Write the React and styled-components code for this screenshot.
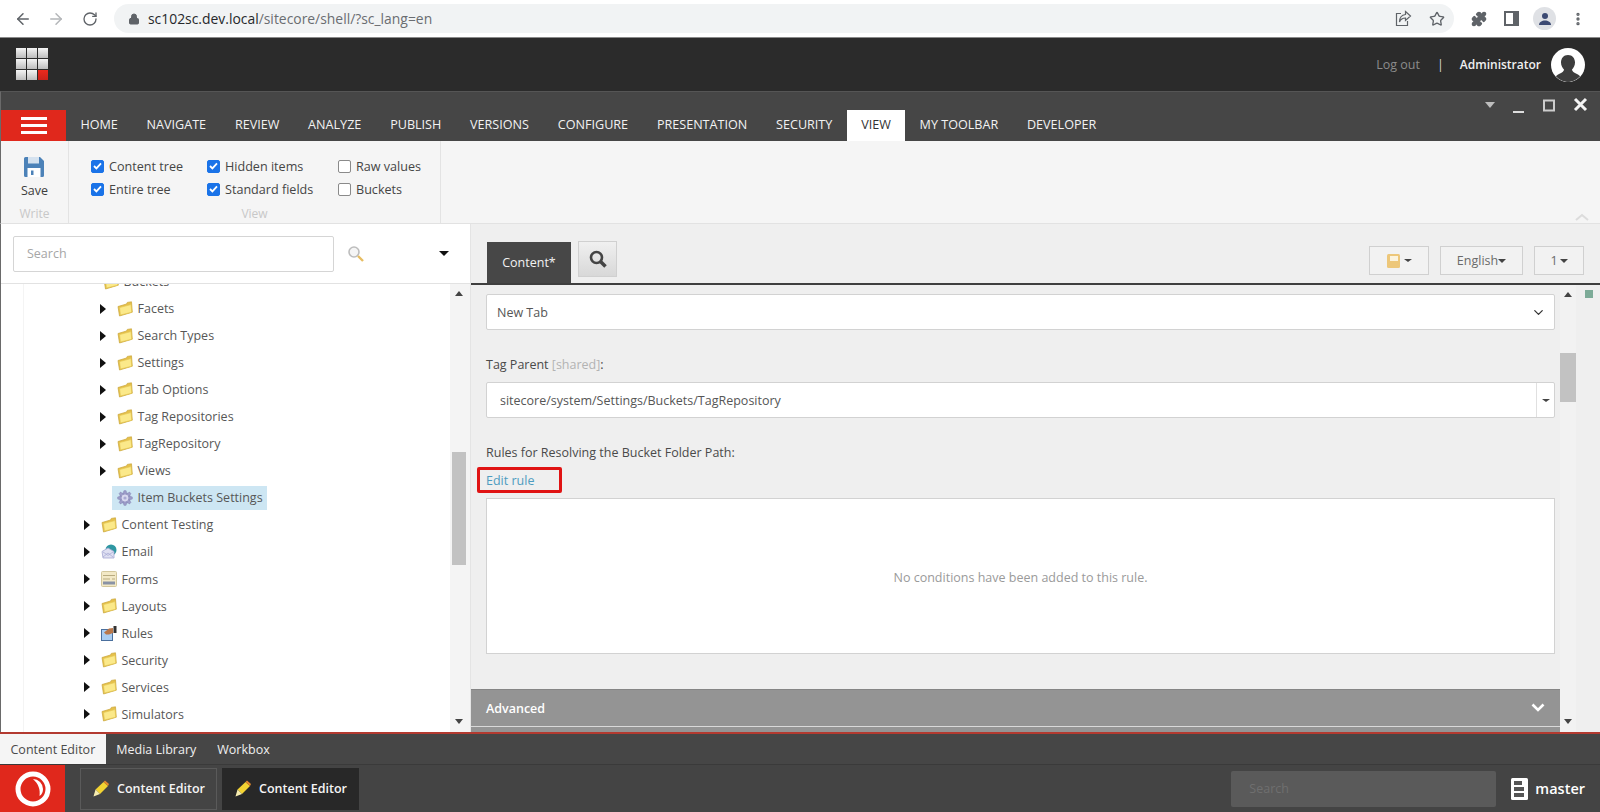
import React from "react";
import styled, { createGlobalStyle } from "styled-components";
import {
  ArrowLeft,
  ArrowRight,
  RotateCw,
  Lock,
  Star,
  Puzzle,
  EllipsisVertical,
  ChevronDown,
} from "lucide-react";

const GlobalStyle = createGlobalStyle`
  html, body { margin: 0; padding: 0; height: 100%; overflow: hidden; }
  body { font-family: "Open Sans", "Liberation Sans", sans-serif; background: #fff; }
  * { box-sizing: border-box; }
`;

const Page = styled.div`
  width: 1600px;
  height: 812px;
  display: flex;
  flex-direction: column;
  overflow: hidden;
`;

/* browser chrome */
const Chrome = styled.div`
  height: 38px;
  flex: none;
  display: flex;
  align-items: center;
  padding: 0 0 0 14px;
  background: #fff;
  color: #5f6368;
  border-bottom: 1px solid #8a8a8a;
`;

const NavBtn = styled.span`
  display: flex;
  width: 18px;
  margin-right: ${(p) => p.$gap || 15}px;
  color: ${(p) => (p.$off ? "#b4b6b9" : "#5f6368")};
`;

const Omnibox = styled.div`
  width: 1340px;
  height: 29px;
  border-radius: 15px;
  background: #f1f3f4;
  display: flex;
  align-items: center;
  gap: 17px;
  padding: 0 9px 0 14px;
`;

const Url = styled.span`
  font-size: 13.9px;
  margin-left: -9px;
  color: #6a6d71;
  flex: 1;
  b { font-weight: 400; color: #26282b; }
`;

const ChromeIcons = styled.div`
  display: flex;
  align-items: center;
  margin-left: 8px;
`;

const ChromeSlot = styled.span`
  width: 33px;
  display: flex;
  align-items: center;
  justify-content: center;
`;

const Avatar = styled.span`
  width: 23px;
  height: 23px;
  border-radius: 50%;
  background: #dfe1e5;
  display: flex;
  align-items: center;
  justify-content: center;
`;

/* sitecore top bar */
const TopBar = styled.div`
  height: 53px;
  flex: none;
  display: flex;
  align-items: center;
  background: #2b2b2b;
  padding: 0 15px 0 16px;
`;

const AppGrid = styled.div`
  display: grid;
  grid-template-columns: repeat(3, 10px);
  grid-auto-rows: 10px;
  gap: 1px;
  margin-top: -1px;
`;

const AppCell = styled.i`
  background: ${(p) => (p.$red ? "linear-gradient(#ec2a1d,#c9221a)" : "linear-gradient(#f4f4f4,#bdbdbd)")};
`;

const TopRight = styled.div`
  margin-left: auto;
  display: flex;
  align-items: center;
  font-size: 12.5px;
`;

const Logout = styled.span`
  color: #8c8c8c;
`;

const Pipe = styled.span`
  color: #d8d8d8;
  margin: 0 16px 0 17px;
`;

const UserName = styled.span`
  color: #f0f0f0;
  font-weight: 600;
  font-size: 12px;
  margin-right: 10px;
`;

const UserPic = styled.span`
  width: 34px;
  height: 34px;
  border-radius: 50%;
  overflow: hidden;
  display: block;
  background: #fff;
`;

/* ribbon */
const TabBar = styled.div`
  height: 50px;
  flex: none;
  position: relative;
  display: flex;
  align-items: flex-end;
  background: #464646;
  border-top: 1px solid #555;
  border-left: 1px solid #6a6a6a;
`;

const Burger = styled.div`
  width: 65px;
  height: 31px;
  background: #e0281c;
  display: flex;
  flex-direction: column;
  align-items: center;
  justify-content: center;
  gap: 4px;
  i { width: 26px; height: 3px; background: #fff; display: block; }
`;

const RibbonTab = styled.div`
  height: 31px;
  padding: 0 14.4px 2px;
  display: flex;
  align-items: center;
  font-size: 12.6px;
  color: ${(p) => (p.$active ? "#333" : "#f2f2f2")};
  background: ${(p) => (p.$active ? "#fff" : "transparent")};
`;

const WinControls = styled.div`
  position: absolute;
  top: 3px;
  right: 5px;
  display: flex;
  align-items: center;
`;

const Ribbon = styled.div`
  height: 83px;
  flex: none;
  display: flex;
  background: #f5f5f5;
  border-left: 1px solid #6a6a6a;
  border-bottom: 1px solid #e2e2e2;
  position: relative;
`;

const RibbonGroup = styled.div`
  width: ${(p) => p.$w}px;
  border-right: 1px solid #e3e3e3;
  display: flex;
  flex-direction: column;
  align-items: center;
  position: relative;
`;

const GroupBody = styled.div`
  flex: 1;
  display: flex;
  flex-direction: column;
  align-items: center;
  padding-top: 16px;
`;

const SaveLabel = styled.span`
  font-size: 12.5px;
  color: #3d3d3d;
  margin-top: 5px;
`;

const GroupName = styled.span`
  font-size: 12px;
  color: #c8c8c8;
  height: 18px;
`;

const CheckGrid = styled.div`
  display: grid;
  grid-template-columns: 116px 131px auto;
  grid-auto-rows: 22.7px;
  align-items: center;
  padding: 14px 0 0 22px;
  align-self: stretch;
  flex: 1;
`;

const CheckItem = styled.label`
  display: flex;
  align-items: center;
  font-size: 12.6px;
  color: #454545;
  white-space: nowrap;
`;

const Box = styled.span`
  width: 13px;
  height: 13px;
  flex: none;
  margin-right: 5px;
  border-radius: 2px;
  display: flex;
  align-items: center;
  justify-content: center;
  background: ${(p) => (p.$on ? "#1a73e8" : "#fff")};
  border: 1px solid ${(p) => (p.$on ? "#1a73e8" : "#8a8a8a")};
`;

const CollapseArrow = styled.span`
  position: absolute;
  right: 11px;
  bottom: 2px;
  line-height: 0;
`;

/* main split */
const Main = styled.div`
  flex: 1;
  min-height: 0;
  display: flex;
`;

const LeftPane = styled.div`
  width: 471px;
  flex: none;
  display: flex;
  flex-direction: column;
  background: #fff;
  border-left: 1px solid #6a6a6a;
  border-right: 1px solid #e4e4e4;
`;

const SearchRow = styled.div`
  height: 60px;
  flex: none;
  display: flex;
  align-items: center;
  padding: 0 0 0 12px;
  border-bottom: 1px solid #e2e2e2;
`;

const SearchInput = styled.div`
  width: 321px;
  height: 36px;
  border: 1px solid #d5d5d5;
  border-radius: 2px;
  display: flex;
  align-items: center;
  padding-left: 13px;
  font-size: 12.5px;
  color: #a6a6a6;
`;

const MagIcon = styled.span`
  margin-left: 13px;
  line-height: 0;
`;

const Caret = styled.span`
  width: 0;
  height: 0;
  border-left: ${(p) => p.$s || 5}px solid transparent;
  border-right: ${(p) => p.$s || 5}px solid transparent;
  border-top: ${(p) => (p.$s ? p.$s - 0.5 : 5)}px solid ${(p) => p.$c || "#111"};
  margin-left: ${(p) => p.$ml || 0}px;
  display: inline-block;
  flex: none;
`;

const TreeWrap = styled.div`
  flex: 1;
  min-height: 0;
  display: flex;
  overflow: hidden;
`;

const TreeClip = styled.div`
  flex: 1;
  overflow: hidden;
  margin-left: 22px;
  border-left: 1px solid #f4f4f4;
`;

const Tree = styled.div`
  margin-top: -16px;
`;

const Row = styled.div`
  height: 27.05px;
  display: flex;
  align-items: center;
  padding-left: ${(p) => p.$indent}px;
  font-size: 12.5px;
  color: #575757;
  white-space: nowrap;
`;

const Expander = styled.span`
  width: 0;
  height: 0;
  border-top: 5px solid transparent;
  border-bottom: 5px solid transparent;
  border-left: 6px solid #111;
  margin-right: 11px;
  flex: none;
`;

const Minus = styled.span`
  width: 6px;
  height: 1px;
  background: #444;
  margin-right: 11px;
`;

const ItemIcon = styled.span`
  width: 16px;
  height: 16px;
  margin-right: 4.5px;
  flex: none;
  line-height: 0;
`;

const Selected = styled.span`
  display: flex;
  align-items: center;
  height: 24px;
  padding: 0 4.5px 0 5px;
  background: #cde6f3;
  margin-left: -5px;
`;

const Scroll = styled.div`
  width: ${(p) => p.$w}px;
  flex: none;
  position: relative;
  background: ${(p) => p.$bg || "transparent"};
`;

const ScrollArrow = styled.span`
  position: absolute;
  left: ${(p) => p.$x}px;
  ${(p) => (p.$up ? "top: 7px;" : "bottom: 8px;")}
  width: 0;
  height: 0;
  border-left: 4px solid transparent;
  border-right: 4px solid transparent;
  ${(p) => (p.$up ? "border-bottom: 5px solid #444;" : "border-top: 5px solid #444;")}
`;

const Thumb = styled.span`
  position: absolute;
  left: ${(p) => p.$l}px;
  right: ${(p) => p.$r}px;
  top: ${(p) => p.$top}px;
  height: ${(p) => p.$h}px;
  background: #c2c2c2;
`;

/* editor */
const RightPane = styled.div`
  flex: 1;
  min-width: 0;
  display: flex;
  flex-direction: column;
  background: #efefef;
`;

const EditorHead = styled.div`
  height: 61px;
  flex: none;
  display: flex;
  align-items: flex-end;
  padding: 0 16px 0 16px;
  border-bottom: 2px solid #3f3f3f;
`;

const ContentTab = styled.div`
  width: 84px;
  height: 41px;
  background: #474747;
  color: #f2f2f2;
  font-size: 12.5px;
  display: flex;
  align-items: center;
  justify-content: center;
`;

const SearchTab = styled.div`
  width: 39px;
  height: 36px;
  margin: 0 0 6px 7px;
  border: 1px solid #d0d0d0;
  background: linear-gradient(#f0f0f0, #d8d8d8);
  display: flex;
  align-items: center;
  justify-content: center;
  color: #444;
`;

const HeadBtns = styled.div`
  margin-left: auto;
  display: flex;
  gap: 11px;
  margin-bottom: 8px;
`;

const HeadBtn = styled.div`
  width: ${(p) => p.$w}px;
  height: 29px;
  border: 1px solid #d0d0d0;
  background: #f2f2f2;
  display: flex;
  align-items: center;
  justify-content: center;
  font-size: 12.5px;
  color: #6a6a6a;
`;

const EditorBody = styled.div`
  flex: 1;
  min-height: 0;
  display: flex;
`;

const Fields = styled.div`
  width: 1089px;
  flex: none;
  display: flex;
  flex-direction: column;
  overflow: hidden;
`;

const FieldStack = styled.div`
  flex: 1;
  padding: 9px 5px 0 15px;
`;

const InputBox = styled.div`
  height: 36px;
  background: #fff;
  border: 1px solid #d2d2d2;
  border-radius: 2px;
  display: flex;
  align-items: center;
  font-size: 12.5px;
  color: #565656;
  padding-left: ${(p) => p.$pad}px;
`;

const EndIcon = styled.span`
  margin-left: auto;
  display: flex;
  align-items: center;
  justify-content: center;
  color: #333;
  width: ${(p) => p.$w}px;
  height: 100%;
  border-left: ${(p) => (p.$line ? "1px solid #e0e0e0" : "none")};
`;

const FieldLabel = styled.div`
  font-size: 12.5px;
  color: #4a4a4a;
  margin-top: ${(p) => p.$mt}px;
  height: 18px;
  line-height: 18px;
  margin-bottom: ${(p) => p.$mb}px;
  span { color: #b3b3b3; }
`;

const EditRule = styled.div`
  width: 85px;
  height: 26px;
  margin: 5px 0 5px -9px;
  padding-left: 6px;
  border: 3px solid #e01313;
  border-radius: 2px;
  display: flex;
  align-items: center;
  font-size: 12.5px;
  color: #4e9cc0;
`;

const RuleBox = styled.div`
  height: 156px;
  background: #fff;
  border: 1px solid #d2d2d2;
  display: flex;
  align-items: center;
  justify-content: center;
  font-size: 12.5px;
  color: #9a9a9a;
  padding-top: 2px;
`;

const SectionBar = styled.div`
  height: 38px;
  flex: none;
  background: #949494;
  border-top: 1px solid #858585;
  border-bottom: 1px solid #d9d9d9;
  color: #fff;
  font-weight: 600;
  font-size: 12.5px;
  display: flex;
  align-items: center;
  justify-content: space-between;
  padding: 0 15px 0 15px;
`;

const NextSection = styled.div`
  height: 5px;
  flex: none;
  background: #949494;
`;

const Validator = styled.i`
  position: absolute;
  top: 5px;
  left: 9px;
  width: 8px;
  height: 8px;
  background: #7dab98;
`;

/* bottom bars */
const BottomTabs = styled.div`
  height: 32px;
  flex: none;
  display: flex;
  background: #464646;
  border-top: 2px solid #b33a30;
`;

const BottomTab = styled.div`
  padding: 0 10.5px;
  display: flex;
  align-items: center;
  font-size: 12.5px;
  color: ${(p) => (p.$active ? "#4a4a4a" : "#f0f0f0")};
  background: ${(p) => (p.$active ? "#f5f5f5" : "transparent")};
`;

const TaskBar = styled.div`
  height: 48px;
  flex: none;
  display: flex;
  align-items: center;
  background: #444;
  border-top: 1px solid #3a3a3a;
`;

const StartBtn = styled.div`
  width: 65px;
  height: 100%;
  background: #e0281c;
  display: flex;
  align-items: center;
  justify-content: center;
  margin-right: 15px;
`;

const TaskBtn = styled.div`
  width: 137px;
  height: 42px;
  margin-right: 5px;
  display: flex;
  align-items: center;
  padding-left: 12px;
  gap: 8px;
  color: #f5f5f5;
  font-weight: 600;
  font-size: 12.5px;
  background: ${(p) => (p.$dark ? "#282828" : "#444")};
  border: 1px solid ${(p) => (p.$dark ? "#282828" : "#5a5a5a")};
`;

const TaskSearch = styled.div`
  margin-left: auto;
  width: 265px;
  height: 36px;
  background: #5a5a5a;
  border-radius: 2px;
  display: flex;
  align-items: center;
  padding-left: 18px;
  font-size: 12.5px;
  color: #6f6f6f;
`;

const DbName = styled.div`
  display: flex;
  align-items: center;
  gap: 7px;
  margin: 0 15px 0 15px;
  color: #fff;
  font-weight: 600;
  font-size: 14.5px;
`;

const ShareIco = () => (
  <svg width="17" height="17" viewBox="0 0 17 17" fill="none" stroke="#5f6368" strokeWidth="1.2">
    <path d="M6 3.500H1.500v12h11V11" />
    <path d="M10.500 1.500 15.500 6l-5 4.500V8C7 8 5.500 9.500 4.500 12c0-4.500 2-7 6-7.500z" />
  </svg>
);

const Folder = () => (
  <svg width="16" height="16" viewBox="0 0 16 16">
    <path d="M1 5.500 9.500 3l.8-1.600 4.200-.6.8 10.400L2.500 15z" fill="#e6c04a" stroke="#c9a53a" strokeWidth=".7" />
    <path d="M2.600 6.600 14 3.600l.7 7.600L3.400 14z" fill="#fbe98a" stroke="#e3c550" strokeWidth=".6" />
  </svg>
);

const Gear = () => (
  <svg width="16" height="16" viewBox="0 0 16 16">
    <g fill="#9d9dc9" stroke="#7f7fae" strokeWidth=".4">
      <circle cx="8" cy="8" r="5.600" />
      {[0, 45, 90, 135].map((a) => (
        <rect key={a} x="6.700" y="0.600" width="2.600" height="14.800" rx=".7" transform={`rotate(${a} 8 8)`} />
      ))}
    </g>
    <circle cx="8" cy="8" r="3.400" fill="#d8d8ee" />
    <circle cx="8" cy="8" r="1.600" fill="#a9a9d2" />
  </svg>
);

const Mail = () => (
  <svg width="16" height="16" viewBox="0 0 16 16">
    <circle cx="10" cy="6" r="5.500" fill="#2e97a2" />
    <path d="M1 7.500 7 4l6 3.500V14H2z" fill="#dfe0f2" stroke="#a5a7d2" strokeWidth=".8" />
    <path d="m2 13 5-4 5 4M2 8l5 3.400L12 8" fill="none" stroke="#a5a7d2" strokeWidth=".7" />
  </svg>
);

const FormIco = () => (
  <svg width="16" height="16" viewBox="0 0 16 16">
    <rect x=".5" y=".5" width="15" height="15" rx="1" fill="#f3e9c6" stroke="#d3c79c" />
    <path d="M2 4.500h12M2 8h7M11 8h3" stroke="#b8ab80" strokeWidth="1" />
    <rect x="2" y="10.500" width="12" height="3" fill="#8a93a5" />
  </svg>
);

const RulesIco = () => (
  <svg width="16" height="16" viewBox="0 0 16 16">
    <rect x=".5" y="4.500" width="11" height="11" fill="#a9cdf2" stroke="#4a6f9d" />
    <path d="M3 7.500 8 3.500l4-.5v5l-4 1.500H5z" fill="#b9774a" />
    <rect x="12.500" y="1" width="3" height="7" fill="#333" />
  </svg>
);

const Pencil = () => (
  <svg width="16" height="17" viewBox="0 0 16 17">
    <path d="M2.500 9.500 10.500 2l4.500 4-8 8z" fill="#f3d332" />
    <path d="M10.500 2 12 .5 16 4l-1 2z" fill="#e4892d" />
    <path d="M2.500 9.500 7 14l-6.500 2.500z" fill="#f6ecb0" />
  </svg>
);

const Row1 = ({ indent, icon = <Folder />, open, children }) => (
  <Row $indent={indent}>
    {open ? <Minus /> : <Expander />}
    <ItemIcon>{icon}</ItemIcon>
    {children}
  </Row>
);

const Check = ({ on, children }) => (
  <CheckItem>
    <Box $on={on}>
      {on && (
        <svg width="9" height="8" viewBox="0 0 9 8">
          <path d="M1 4l2.400 2.400L8 1.400" fill="none" stroke="#fff" strokeWidth="1.800" />
        </svg>
      )}
    </Box>
    {children}
  </CheckItem>
);

const ribbonTabs = [
  "HOME",
  "NAVIGATE",
  "REVIEW",
  "ANALYZE",
  "PUBLISH",
  "VERSIONS",
  "CONFIGURE",
  "PRESENTATION",
  "SECURITY",
  "VIEW",
  "MY TOOLBAR",
  "DEVELOPER",
];

const appCells = [0, 1, 2, 3, 4, 5, 6, 7, 8];

export default function App() {
  return (
    <Page>
      <GlobalStyle />
      <Chrome>
        <NavBtn $gap={15}><ArrowLeft size={18} /></NavBtn>
        <NavBtn $off $gap={17}><ArrowRight size={18} /></NavBtn>
        <NavBtn $gap={14}><RotateCw size={16} /></NavBtn>
        <Omnibox>
          <Lock size={12} fill="#5f6368" />
          <Url><b>sc102sc.dev.local</b>/sitecore/shell/?sc_lang=en</Url>
          <ShareIco />
          <Star size={16} />
        </Omnibox>
        <ChromeIcons>
          <ChromeSlot><Puzzle size={16} fill="#5f6368" /></ChromeSlot>
          <ChromeSlot>
            <svg width="15" height="15" viewBox="0 0 15 15">
              <path d="M0 0h15v15H0z" fill="#5f6368" />
              <path d="M2 2h7v11H2z" fill="#fff" />
            </svg>
          </ChromeSlot>
          <ChromeSlot>
            <Avatar>
              <svg width="14" height="14" viewBox="0 0 14 14" fill="#3c4a73">
                <circle cx="7" cy="4" r="3" />
                <path d="M1 13c0-3 3-4.500 6-4.500S13 10 13 13z" />
              </svg>
            </Avatar>
          </ChromeSlot>
          <ChromeSlot><EllipsisVertical size={16} strokeWidth={3} /></ChromeSlot>
        </ChromeIcons>
      </Chrome>

      <TopBar>
        <AppGrid>
          {appCells.map((c) => (
            <AppCell key={c} $red={c === 8} />
          ))}
        </AppGrid>
        <TopRight>
          <Logout>Log out</Logout>
          <Pipe>|</Pipe>
          <UserName>Administrator</UserName>
          <UserPic>
            <svg width="34" height="34" viewBox="0 0 34 34">
              <path d="M17 7c4.500 0 7 3.500 7 7.500 0 3-1.500 5.500-3 7 0 2 2 3 5 4.500 2 1 3 2 3 2.500-3 3-7.500 5.500-12 5.500s-9-2.500-12-5.500c0-.5 1-1.500 3-2.500 3-1.500 5-2.500 5-4.500-1.500-1.500-3-4-3-7C10 10.500 12.500 7 17 7z" fill="#3d3d3d" />
            </svg>
          </UserPic>
        </TopRight>
      </TopBar>

      <TabBar>
        <Burger><i /><i /><i /></Burger>
        {ribbonTabs.map((t) => (
          <RibbonTab key={t} $active={t === "VIEW"}>{t}</RibbonTab>
        ))}
        <WinControls>
          <svg width="110" height="22" viewBox="0 0 110 22">
            <path d="M0 7h10l-5 6z" fill="#bdbdbd" />
            <path d="M28 17h11" stroke="#ddd" strokeWidth="2" />
            <rect x="59" y="5.500" width="10" height="10" fill="none" stroke="#ccc" strokeWidth="2" />
            <path d="M90 4l11 11M101 4 90 15" stroke="#f4f4f4" strokeWidth="3" />
          </svg>
        </WinControls>
      </TabBar>

      <Ribbon>
        <RibbonGroup $w={68}>
          <GroupBody>
            <svg width="20" height="20" viewBox="0 0 20 20">
              <path d="M0 1.500A1.500 1.500 0 0 1 1.500 0H16l4 4v14.500a1.500 1.500 0 0 1-1.500 1.500h-17A1.500 1.500 0 0 1 0 18.500z" fill="#4c82b8" />
              <path d="M4 0h11v6.500H4z" fill="#d5e2ef" />
              <path d="M3.500 11h13v9h-13z" fill="#fff" />
              <path d="M7 13.500h2.500V18H7z" fill="#4c82b8" />
            </svg>
            <SaveLabel>Save</SaveLabel>
          </GroupBody>
          <GroupName>Write</GroupName>
        </RibbonGroup>
        <RibbonGroup $w={372}>
          <CheckGrid>
            <Check on>Content tree</Check>
            <Check on>Hidden items</Check>
            <Check>Raw values</Check>
            <Check on>Entire tree</Check>
            <Check on>Standard fields</Check>
            <Check>Buckets</Check>
          </CheckGrid>
          <GroupName>View</GroupName>
        </RibbonGroup>
        <CollapseArrow>
          <svg width="14" height="8" viewBox="0 0 14 8">
            <path d="M1 7l6-5 6 5" fill="none" stroke="#dcdcdc" strokeWidth="2" />
          </svg>
        </CollapseArrow>
      </Ribbon>

      <Main>
        <LeftPane>
          <SearchRow>
            <SearchInput>Search</SearchInput>
            <MagIcon>
              <svg width="18" height="18" viewBox="0 0 18 18">
                <circle cx="7" cy="7" r="5" fill="#f5f5f5" stroke="#bdbdbd" strokeWidth="1.600" />
                <path d="m11 11 5 5" stroke="#e7bd62" strokeWidth="2.400" />
              </svg>
            </MagIcon>
            <Caret $s={5.500} $ml={74} />
          </SearchRow>
          <TreeWrap>
            <TreeClip>
              <Tree>
                <Row1 indent={62} open>Buckets</Row1>
                <Row1 indent={76}>Facets</Row1>
                <Row1 indent={76}>Search Types</Row1>
                <Row1 indent={76}>Settings</Row1>
                <Row1 indent={76}>Tab Options</Row1>
                <Row1 indent={76}>Tag Repositories</Row1>
                <Row1 indent={76}>TagRepository</Row1>
                <Row1 indent={76}>Views</Row1>
                <Row $indent={93}>
                  <Selected>
                    <ItemIcon><Gear /></ItemIcon>
                    Item Buckets Settings
                  </Selected>
                </Row>
                <Row1 indent={60}>Content Testing</Row1>
                <Row1 indent={60} icon={<Mail />}>Email</Row1>
                <Row1 indent={60} icon={<FormIco />}>Forms</Row1>
                <Row1 indent={60}>Layouts</Row1>
                <Row1 indent={60} icon={<RulesIco />}>Rules</Row1>
                <Row1 indent={60}>Security</Row1>
                <Row1 indent={60}>Services</Row1>
                <Row1 indent={60}>Simulators</Row1>
              </Tree>
            </TreeClip>
            <Scroll $w={20} $bg="#f4f4f4">
              <ScrollArrow $up $x={5} />
              <Thumb $l={2} $r={4} $top={168} $h={113} />
              <ScrollArrow $x={5} />
            </Scroll>
          </TreeWrap>
        </LeftPane>

        <RightPane>
          <EditorHead>
            <ContentTab>Content*</ContentTab>
            <SearchTab>
              <svg width="18" height="18" viewBox="0 0 18 18" fill="none" stroke="#444">
                <circle cx="7.500" cy="7.500" r="5.500" strokeWidth="2.600" />
                <path d="m11.500 11.500 5 5" strokeWidth="3.600" />
              </svg>
            </SearchTab>
            <HeadBtns>
              <HeadBtn $w={60}>
                <svg width="14" height="14" viewBox="0 0 14 14">
                  <rect x="1" y="0" width="13" height="14" rx="1.500" fill="#edc77a" />
                  <rect x="4" y="2" width="8" height="5" fill="#fbf3de" />
                </svg>
                <Caret $ml={4} $s={4} $c="#444" />
              </HeadBtn>
              <HeadBtn $w={83}>English<Caret $s={4.500} $c="#444" /></HeadBtn>
              <HeadBtn $w={50}>1<Caret $ml={2} $s={4.500} $c="#444" /></HeadBtn>
            </HeadBtns>
          </EditorHead>
          <EditorBody>
            <Fields>
              <FieldStack>
                <InputBox $pad={10}>
                  New Tab
                  <EndIcon $w={32}><ChevronDown size={15} strokeWidth={2} /></EndIcon>
                </InputBox>
                <FieldLabel $mt={26} $mb={8}>Tag Parent <span>[shared]</span>:</FieldLabel>
                <InputBox $pad={13}>
                  sitecore/system/Settings/Buckets/TagRepository
                  <EndIcon $w={18} $line><Caret $s={4} $c="#444" /></EndIcon>
                </InputBox>
                <FieldLabel $mt={26} $mb={0}>Rules for Resolving the Bucket Folder Path:</FieldLabel>
                <EditRule>Edit rule</EditRule>
                <RuleBox>No conditions have been added to this rule.</RuleBox>
              </FieldStack>
              <SectionBar>
                Advanced
                <svg width="14" height="10" viewBox="0 0 14 10">
                  <path d="M1.500 1.500 7 7l5.500-5.500" fill="none" stroke="#fff" strokeWidth="2.600" />
                </svg>
              </SectionBar>
              <NextSection />
            </Fields>
            <Scroll $w={16} $bg="#f2f2f2">
              <ScrollArrow $up $x={4} />
              <Thumb $l={0} $r={0} $top={68} $h={49} />
              <ScrollArrow $x={4} />
            </Scroll>
            <Scroll $w={24}>
              <Validator />
            </Scroll>
          </EditorBody>
        </RightPane>
      </Main>

      <BottomTabs>
        <BottomTab $active>Content Editor</BottomTab>
        <BottomTab>Media Library</BottomTab>
        <BottomTab>Workbox</BottomTab>
      </BottomTabs>

      <TaskBar>
        <StartBtn>
          <svg width="36" height="36" viewBox="0 0 36 36">
            <circle cx="18" cy="18" r="15" fill="none" stroke="#fff" strokeWidth="5" />
            <path d="M18 8a10 10 0 0 1 10 10c0 3-1 5.500-3.500 7 1-6.500-1-12-6.500-17z" fill="#fff" />
          </svg>
        </StartBtn>
        <TaskBtn><Pencil />Content Editor</TaskBtn>
        <TaskBtn $dark><Pencil />Content Editor</TaskBtn>
        <TaskSearch>Search</TaskSearch>
        <DbName>
          <svg width="17" height="22" viewBox="0 0 17 22">
            <rect width="17" height="22" rx="1.500" fill="#fff" />
            <path d="M3 3h8v4H3zM3 9h10v4H3zM3 15h10v4H3z" fill="#555" />
          </svg>
          master
        </DbName>
      </TaskBar>
    </Page>
  );
}
